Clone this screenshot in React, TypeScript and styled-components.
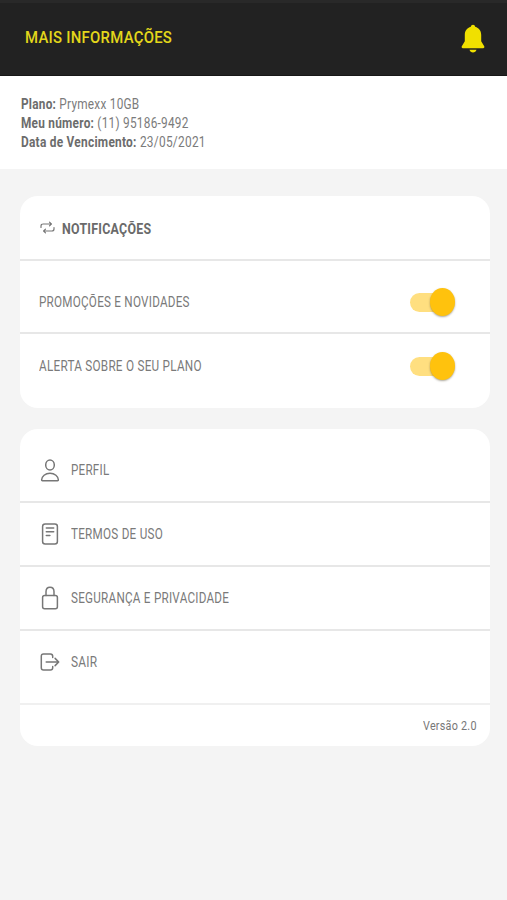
import React from "react";
import styled, { createGlobalStyle } from "styled-components";

const GlobalStyle = createGlobalStyle`
  *, *::before, *::after { box-sizing: border-box; }
  body {
    margin: 0;
    background: #f4f4f4;
    font-family: Roboto, "Liberation Sans", sans-serif;
    color: #777;
  }
`;

const Screen = styled.div`
  min-height: 900px;
  background: #f4f4f4;
`;

const Header = styled.header`
  display: flex;
  justify-content: space-between;
  height: 76px;
  padding: 24px 22px 0 25px;
  background: #222;
  border-top: 3px solid #292929;
  border-bottom: 1px solid #171717;
`;

const Label = styled.span<{ $scale?: number }>`
  display: inline-block;
  white-space: nowrap;
  letter-spacing: 0.3px;
  transform: scaleX(${(p) => p.$scale ?? 1});
  transform-origin: left center;
`;

const Title = styled.h1`
  margin: 0;
  font-size: 17px;
  line-height: 20px;
  font-weight: 500;
  color: #e3d71b;
`;

const BellIcon = styled.svg`
  display: block;
  width: 24px;
  height: 31px;
  margin-top: -4px;
  fill: #f0e000;
`;

const PlanInfo = styled.section`
  height: 93px;
  padding: 19px 20.5px 0;
  background: #fff;
  font-size: 14px;
  line-height: 19px;
  color: #7b7b7b;

  b {
    font-weight: 700;
    color: #6c6c6c;
  }
`;

const PlanLine = styled.div`
  height: 19px;
`;

const Cards = styled.main`
  display: flex;
  flex-direction: column;
  gap: 21px;
  padding: 27px 17px 0 20px;
`;

const Card = styled.section`
  background: #fff;
  border-radius: 18px;
  overflow: hidden;
`;

const Row = styled.div<{ $height: number; $top: number; $left?: number; $line?: string }>`
  display: flex;
  align-items: flex-start;
  height: ${(p) => p.$height}px;
  padding: ${(p) => p.$top}px 32px 0 ${(p) => p.$left ?? 19}px;
  border-bottom: ${(p) => (p.$line ? `2px solid ${p.$line}` : "none")};
  font-size: 14px;
  line-height: 20px;
  color: #7a7a7a;
`;

const CardTitle = styled.h2`
  margin: 1px 0 0 7px;
  font-size: 14px;
  line-height: 20px;
  font-weight: 700;
  color: #6a6a6a;
`;

const Toggle = styled.button`
  display: flex;
  align-items: center;
  width: 45px;
  height: 28px;
  margin: -4px 3px 0 auto;
  padding: 0;
  border: 0;
  background: none;
`;

const Track = styled.span`
  width: 36px;
  height: 19px;
  border-radius: 9.5px;
  background: #ffdf80;
`;

const Thumb = styled.span`
  flex: none;
  width: 25px;
  height: 28px;
  margin-left: -16px;
  border-radius: 50%;
  background: #ffc20d;
  box-shadow: 0 1px 2px rgba(70, 60, 30, 0.45);
`;

const LineIcon = styled.svg<{ $w: number; $h: number }>`
  flex: none;
  width: ${(p) => p.$w}px;
  height: ${(p) => p.$h}px;
  fill: none;
  stroke: #777;
  stroke-width: 1.5;
  stroke-linecap: round;
  stroke-linejoin: round;
`;

const MenuIcon = styled(LineIcon)`
  margin: -2px 11px 0 0;
`;

const RepeatIcon = styled(LineIcon)`
  margin-top: 3px;
  stroke-width: 1.2;
`;

const Footer = styled.footer`
  display: flex;
  justify-content: flex-end;
  height: 41px;
  padding: 11px 13px 0;
  font-size: 13px;
  line-height: 20px;
  color: #777;

  span { transform-origin: right center; }
`;

const planLines = [
  { name: "Plano:", value: "Prymexx 10GB", scale: 0.843 },
  { name: "Meu número:", value: "(11) 95186-9492", scale: 0.845 },
  { name: "Data de Vencimento:", value: "23/05/2021", scale: 0.85 },
];

const menu = [
  {
    text: "PERFIL", scale: 0.83, height: 74, top: 31,
    icon: <><ellipse cx="10" cy="7" rx="4.3" ry="5.1" /><path d="M1.6 22.1C1.6 18.3 5.4 15.3 10 15.3s8.4 3 8.4 6.8q0 .7-.8.7H2.4q-.8 0-.8-.7Z" /></>,
  },
  {
    text: "TERMOS DE USO", scale: 0.835, height: 64, top: 21,
    icon: <><rect x="2.6" y="2" width="14.8" height="20" rx="2.5" /><path d="M6.3 6h7.4M6.3 9.8h7.4M6.3 13.5h3.6" /></>,
  },
  {
    text: "SEGURANÇA E PRIVACIDADE", scale: 0.834, height: 64, top: 21,
    icon: <><rect x="2.6" y="9.5" width="14.8" height="13.2" rx="2" /><path d="M6 9.5V5.7C6 3 7.7 1.2 10 1.2s4 1.8 4 4.5v3.8" /></>,
  },
  {
    text: "SAIR", scale: 0.85, height: 74, top: 21,
    icon: <><path d="M12.7 7.5V6.3q0-2.3-2.3-2.3H3.5Q1.3 4 1.3 6.3v11.4Q1.3 20 3.5 20h6.9q2.3 0 2.3-2.3v-1.1M6.2 12h12.2M15.1 8.4l3.6 3.6-3.6 3.6" /></>,
  },
];

function Switch({ label }: { label: string }) {
  return (
    <Toggle type="button" role="switch" aria-checked="true" aria-label={label}>
      <Track />
      <Thumb />
    </Toggle>
  );
}

export default function App() {
  return (
    <Screen>
      <GlobalStyle />
      <Header>
        <Title><Label $scale={0.876}>MAIS INFORMAÇÕES</Label></Title>
        <BellIcon viewBox="0 0 24 30">
          <path d="M12 1.2c1.2 0 2 .8 2.2 2 3.7 1 6 4.2 6 8.2v6.3l3 5.1c.6 1-.1 1.9-1.1 1.9H1.9c-1 0-1.7-.9-1.1-1.9l3-5.1v-6.3c0-4 2.3-7.2 6-8.2.2-1.2 1-2 2.2-2ZM8.5 26.2h7c-.5 1.7-1.8 2.8-3.5 2.8s-3-1.1-3.5-2.8Z" />
        </BellIcon>
      </Header>
      <PlanInfo>
        {planLines.map((line) => (
          <PlanLine key={line.name}>
            <Label $scale={line.scale}><b>{line.name}</b> {line.value}</Label>
          </PlanLine>
        ))}
      </PlanInfo>
      <Cards>
        <Card>
          <Row $height={65} $top={22} $left={20} $line="#e7e7e7">
            <RepeatIcon $w={15} $h={13} viewBox="0 0 15 13">
              <path d="M1 6.4V5Q1 3 3.2 3h8.1M9.5 1.1 11.4 3 9.5 4.9M14 6.6V8q0 2-2.2 2H3.7M5.5 8.1 3.6 10l1.9 1.9" />
            </RepeatIcon>
            <CardTitle><Label $scale={0.885}>NOTIFICAÇÕES</Label></CardTitle>
          </Row>
          <Row $height={73} $top={31} $line="#e7e7e7">
            <Label $scale={0.833}>PROMOÇÕES E NOVIDADES</Label>
            <Switch label="Promoções e novidades" />
          </Row>
          <Row $height={74} $top={22}>
            <Label $scale={0.838}>ALERTA SOBRE O SEU PLANO</Label>
            <Switch label="Alerta sobre o seu plano" />
          </Row>
        </Card>
        <Card>
          {menu.map((item, i) => (
            <Row key={item.text} $height={item.height} $top={item.top} $left={20} $line={i === 3 ? "#f0f0f0" : "#e7e7e7"}>
              <MenuIcon $w={20} $h={24} viewBox="0 0 20 24">{item.icon}</MenuIcon>
              <Label $scale={item.scale}>{item.text}</Label>
            </Row>
          ))}
          <Footer><Label $scale={0.83}>Versão 2.0</Label></Footer>
        </Card>
      </Cards>
    </Screen>
  );
}
